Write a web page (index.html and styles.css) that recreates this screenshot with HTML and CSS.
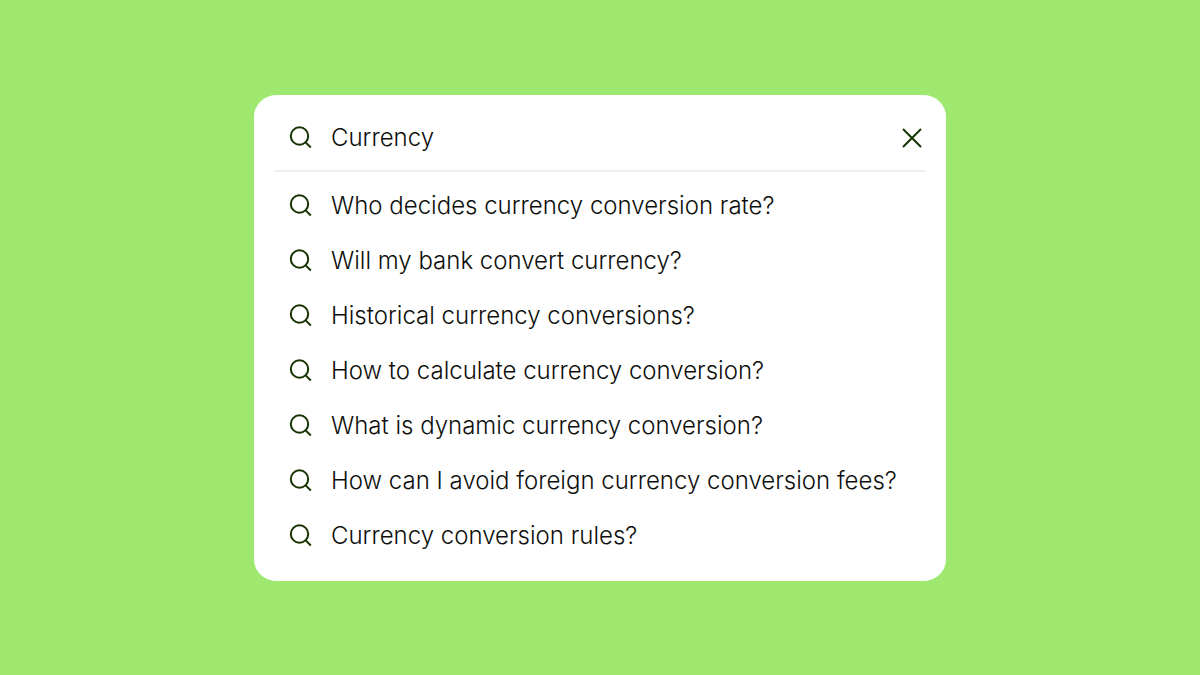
FILE: index.html
```html
<!DOCTYPE html>
<html lang="en">
<head>
<meta charset="utf-8">
<meta name="viewport" content="width=device-width, initial-scale=1">
<title>Search</title>
<link rel="stylesheet" href="styles.css">
</head>
<body>
<svg class="sprite" aria-hidden="true">
  <symbol id="search" viewBox="0 0 24 24"><circle cx="11.5" cy="10" r="8.7"/><path d="M17.4 16.1L22.8 21.5"/></symbol>
</svg>
<main class="page">
  <form class="panel" role="search">
    <div class="field">
      <svg class="icon" aria-hidden="true"><use href="#search"/></svg>
      <input class="input" type="text" aria-label="Search" value="Currency">
      <button class="clear" type="button" aria-label="Clear search"><svg class="cross" viewBox="0 0 20 20" aria-hidden="true"><path d="M1 1L19 19M19 1L1 19"/></svg></button>
    </div>
    <ul class="list">
      <li><a class="item" href="#"><svg class="icon" aria-hidden="true"><use href="#search"/></svg><span>Who decides currency conversion rate?</span></a></li>
      <li><a class="item" href="#"><svg class="icon" aria-hidden="true"><use href="#search"/></svg><span>Will my bank convert currency?</span></a></li>
      <li><a class="item" href="#"><svg class="icon" aria-hidden="true"><use href="#search"/></svg><span>Historical currency conversions?</span></a></li>
      <li><a class="item" href="#"><svg class="icon" aria-hidden="true"><use href="#search"/></svg><span>How to calculate currency conversion?</span></a></li>
      <li><a class="item" href="#"><svg class="icon" aria-hidden="true"><use href="#search"/></svg><span>What is dynamic currency conversion?</span></a></li>
      <li><a class="item" href="#"><svg class="icon" aria-hidden="true"><use href="#search"/></svg><span>How can I avoid foreign currency conversion fees?</span></a></li>
      <li><a class="item" href="#"><svg class="icon" aria-hidden="true"><use href="#search"/></svg><span>Currency conversion rules?</span></a></li>
    </ul>
  </form>
</main>
</body>
</html>
```
FILE: styles.css
```css
* { box-sizing: border-box; }
body { margin: 0; background: #9fe870; color: #0e0f0c; font-family: Inter, "Liberation Sans", sans-serif; font-size: 24px; font-weight: 340; line-height: 32px; }
.sprite { position: absolute; width: 0; height: 0; }
.page { min-height: 100vh; display: flex; align-items: center; justify-content: center; }
.panel { width: 100%; max-width: 692px; padding: 8px 21px 17px 20px; border-radius: 22px; background: #fff; }
.field { display: flex; align-items: center; gap: 19px; padding: 19px 3px 16px 14px; border-bottom: 2px solid #efefef; }
.icon { flex: none; width: 24px; height: 24px; fill: none; stroke: #163300; stroke-width: 2; }
.input { flex: 1; min-width: 0; height: 32px; padding: 0; border: 0; outline: 0; background: none; color: inherit; font: inherit; }
.clear { display: flex; padding: 0; border: 0; background: none; cursor: pointer; }
.cross { width: 20px; height: 20px; fill: none; stroke: #163300; stroke-width: 2; }
.list { margin: 0; padding: 7px 0 0; list-style: none; }
.item { display: flex; align-items: center; gap: 19px; min-height: 55px; padding: 0 0 0 14px; color: inherit; text-decoration: none; }
```
